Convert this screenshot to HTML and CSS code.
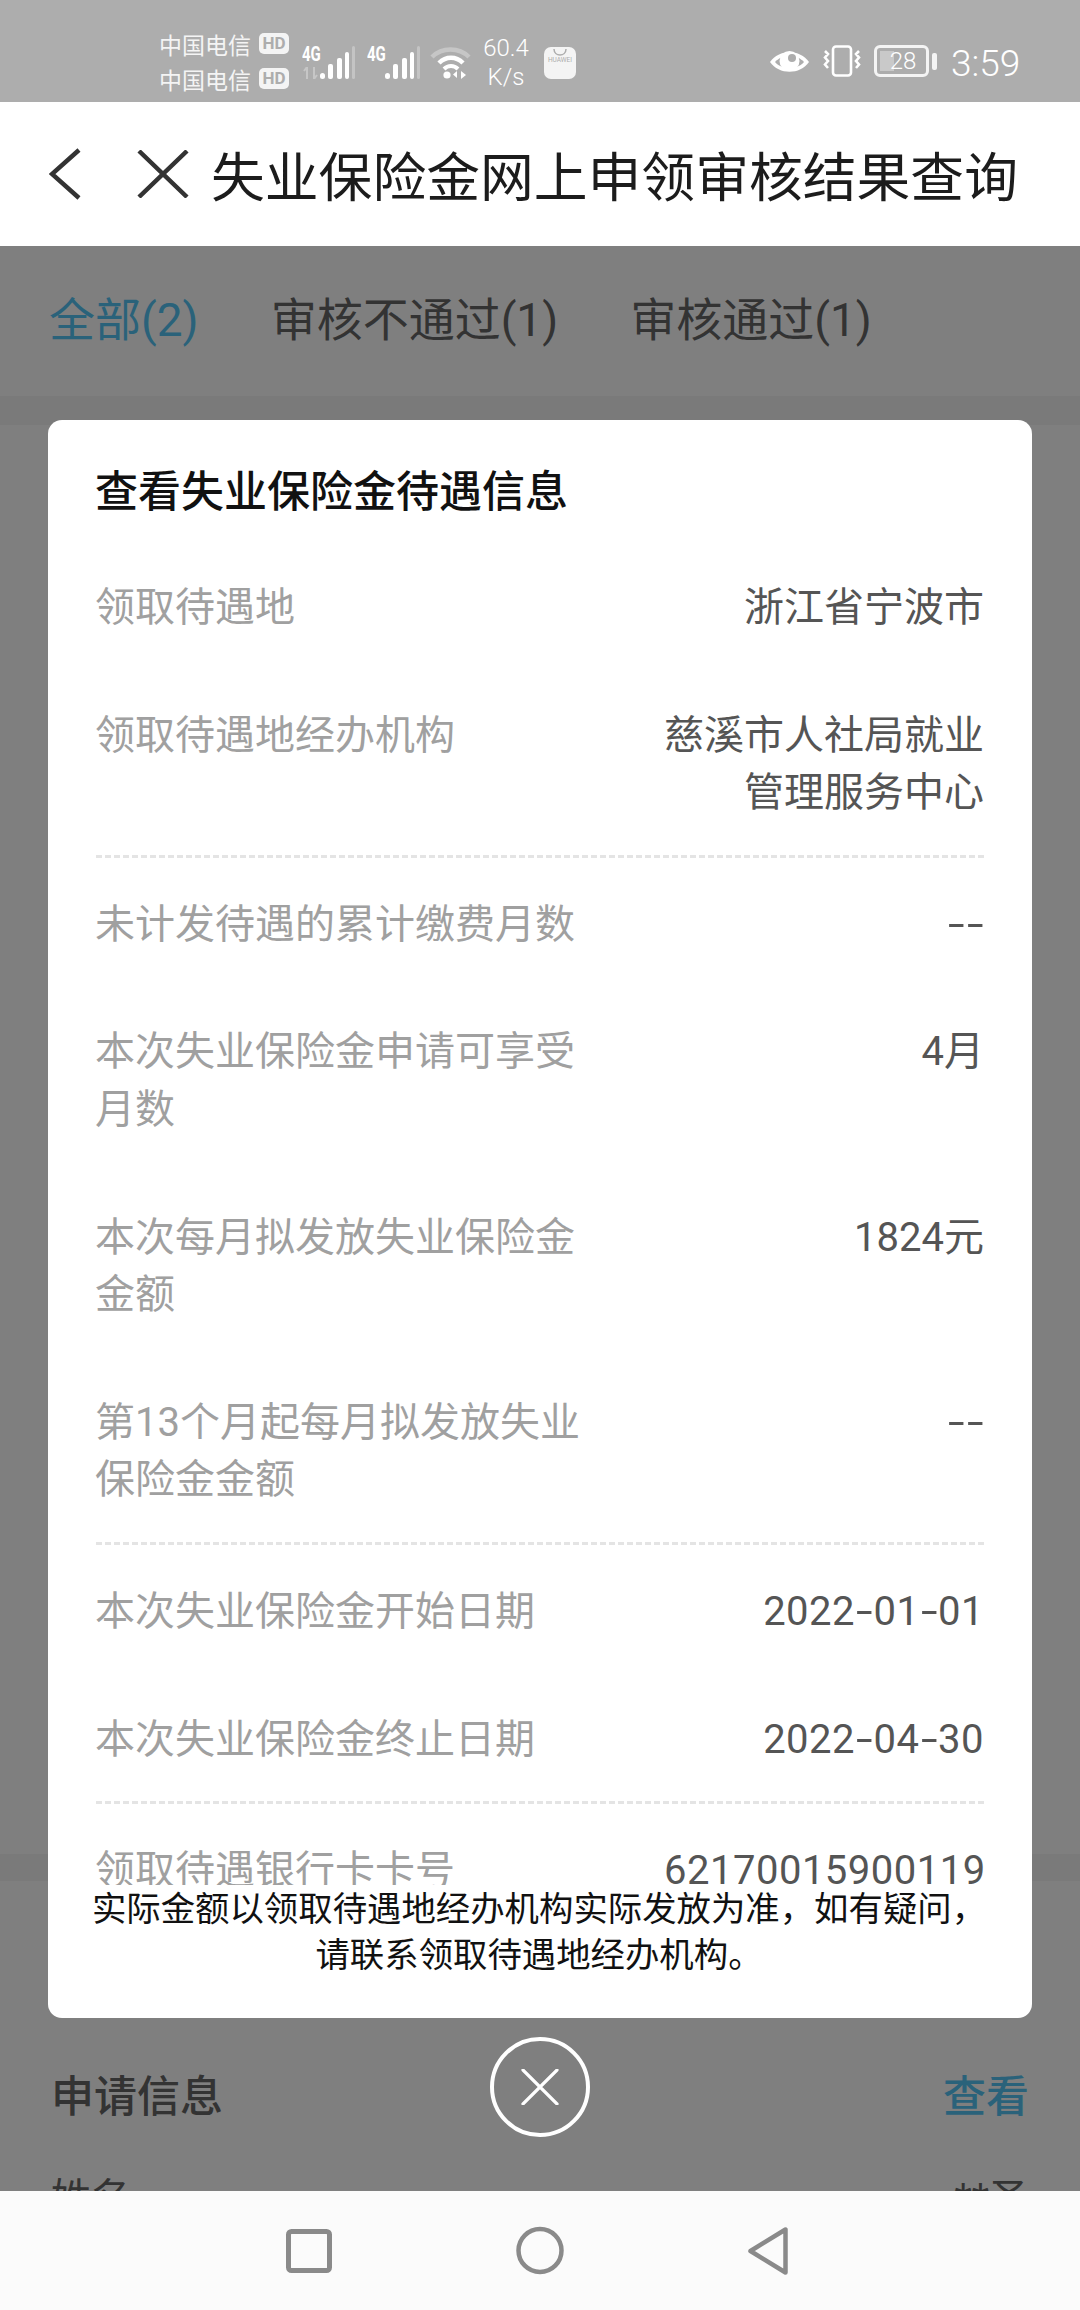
FILE: index.html
```html
<!DOCTYPE html>
<html lang="zh-CN">
<head>
<meta charset="utf-8">
<title>失业保险金网上申领审核结果查询</title>
<link rel="stylesheet" href="styles.css">
</head>
<body>
<div class="phone">
  <div class="status">
    <div class="carriers">
      <div class="carrier"><span>中国电信</span><b class="hd">HD</b></div>
      <div class="carrier"><span>中国电信</span><b class="hd">HD</b></div>
    </div>
    <div class="net net-a">
      <span class="g4">4G</span>
      <svg class="arrows" width="15" height="12" viewBox="0 0 15 12"><path d="M4 0v12M4 0 1 4M11 12V0M11 12l3-4" fill="none" stroke="#c6c6c6" stroke-width="2"/></svg>
      <svg class="bars" width="35" height="33" viewBox="0 0 35 33"><rect x="0" y="27" width="5" height="6" rx="2.500" fill="#fff"/><rect x="8" y="18" width="5" height="15" rx="2" fill="#fff"/><rect x="17" y="12" width="5" height="21" rx="2" fill="#fff"/><rect x="25" y="6" width="4" height="27" rx="2" fill="#fff"/><rect x="32" y="0" width="3" height="33" rx="1.500" fill="#c4c4c4"/></svg>
    </div>
    <div class="net net-b">
      <span class="g4">4G</span>
      <svg class="bars" width="35" height="33" viewBox="0 0 35 33"><rect x="0" y="27" width="5" height="6" rx="2.500" fill="#fff"/><rect x="8" y="18" width="5" height="15" rx="2" fill="#fff"/><rect x="17" y="12" width="5" height="21" rx="2" fill="#fff"/><rect x="25" y="6" width="4" height="27" rx="2" fill="#fff"/><rect x="32" y="0" width="3" height="33" rx="1.500" fill="#c4c4c4"/></svg>
    </div>
    <svg class="wifi" width="42" height="33" viewBox="0 0 42 33"><path d="M2 11C12 1 29 1 39 11" fill="none" stroke="#c6c6c6" stroke-width="4.500"/><path d="M9 17c7-7 17-7 24 0" fill="none" stroke="#fff" stroke-width="4.500"/><path d="M14 23c4-4 10-4 14 0" fill="none" stroke="#fff" stroke-width="4"/><circle cx="17" cy="29" r="3.600" fill="#fff"/><path d="M27 25v7l-4-3.500zM31 33v-8l5 4z" fill="#fff"/></svg>
    <div class="speed"><span>60.4</span><span>K/s</span></div>
    <div class="app"><svg width="14" height="7" viewBox="0 0 14 7"><path d="M1 0c0 8 12 8 12 0" fill="none" stroke="#adadad" stroke-width="1.500"/></svg><span>HUAWEI</span></div>
    <div class="right">
      <svg class="eye" width="41" height="26" viewBox="0 0 41 26"><path d="M1 13C10 0 31 0 40 13 31 26 10 26 1 13Z" fill="#fff"/><path d="M6 13C13 5 28 5 35 13 28 21 13 21 6 13Z" fill="#adadad"/><circle cx="20.500" cy="12" r="10" fill="#fff"/><circle cx="23" cy="9" r="4" fill="#adadad"/></svg>
      <svg class="vib" width="40" height="32" viewBox="0 0 40 32"><rect x="11" y="1.500" width="18" height="29" rx="3" fill="none" stroke="#fff" stroke-width="2.600"/><path d="M3 6l3 3-3 3.500 3 3.500-3 3.500 3 3.500M37 6l-3 3 3 3.500-3 3.500 3 3.500-3 3.500" fill="none" stroke="#fff" stroke-width="2.600"/></svg>
      <div class="battery"><span class="level"></span><span class="num">28</span></div>
      <span class="nub"></span>
      <span class="time">3:59</span>
    </div>
  </div>

  <header class="top">
    <svg class="back" width="32" height="52" viewBox="0 0 32 52"><path d="M30 2 3 26l27 24" fill="none" stroke="#333" stroke-width="4.500"/></svg>
    <svg class="shut" width="52" height="48" viewBox="0 0 52 48"><path d="M2 1l48 46M50 1 2 47" fill="none" stroke="#333" stroke-width="4.500"/></svg>
    <h1 class="page-title">失业保险金网上申领审核结果查询</h1>
  </header>

  <main class="page">
    <nav class="tabs">
      <span class="tab active">全部(2)</span>
      <span class="tab">审核不通过(1)</span>
      <span class="tab">审核通过(1)</span>
    </nav>
    <div class="band"></div>
    <div class="list"></div>
    <div class="band band-low"></div>
    <section class="apply">
      <div class="apply-head"><h2>申请信息</h2><span class="link">查看</span></div>
      <div class="apply-row"><span>姓名</span><span>**圣</span></div>
    </section>

    <div class="overlay">
      <div class="modal">
        <h3 class="modal-title">查看失业保险金待遇信息</h3>
        <div class="scroller">
          <div class="group">
            <div class="row"><div class="key">领取待遇地</div><div class="val">浙江省宁波市</div></div>
            <div class="row"><div class="key">领取待遇地经办机构</div><div class="val">慈溪市人社局就业管理服务中心</div></div>
          </div>
          <div class="group">
            <div class="row"><div class="key">未计发待遇的累计缴费月数</div><div class="val"><span class="dash">-</span><span class="dash">-</span></div></div>
            <div class="row"><div class="key">本次失业保险金申请可享受月数</div><div class="val">4月</div></div>
            <div class="row"><div class="key">本次每月拟发放失业保险金金额</div><div class="val">1824元</div></div>
            <div class="row"><div class="key">第13个月起每月拟发放失业保险金金额</div><div class="val"><span class="dash">-</span><span class="dash">-</span></div></div>
          </div>
          <div class="group">
            <div class="row"><div class="key">本次失业保险金开始日期</div><div class="val digits">2022<span class="dash">-</span>01<span class="dash">-</span>01</div></div>
            <div class="row"><div class="key">本次失业保险金终止日期</div><div class="val digits">2022<span class="dash">-</span>04<span class="dash">-</span>30</div></div>
          </div>
          <div class="group">
            <div class="row"><div class="key">领取待遇银行卡卡号</div><div class="val digits">62170015900119</div></div>
          </div>
        </div>
        <p class="note">实际金额以领取待遇地经办机构实际发放为准，如有疑问，<br>请联系领取待遇地经办机构。</p>
      </div>
      <button class="close" type="button" aria-label="关闭">
        <svg width="38" height="36" viewBox="0 0 38 36"><path d="M2 1l34 34M36 1 2 35" fill="none" stroke="#fff" stroke-width="3.200" stroke-linecap="round"/></svg>
      </button>
    </div>
  </main>

  <footer class="navbar">
    <svg width="46" height="44" viewBox="0 0 46 44"><rect x="2.500" y="2.500" width="41" height="39" rx="3" fill="none" stroke="#8a8a8a" stroke-width="5"/></svg>
    <svg width="48" height="49" viewBox="0 0 48 49"><circle cx="24" cy="24.500" r="21.500" fill="none" stroke="#8a8a8a" stroke-width="4.500"/></svg>
    <svg width="42" height="50" viewBox="0 0 42 50"><path d="M38.500 3.500v43L3.500 25Z" fill="none" stroke="#8a8a8a" stroke-width="4.500" stroke-linejoin="round"/></svg>
  </footer>
</div>
</body>
</html>
```

FILE: styles.css
```css
* { box-sizing: border-box; }
html, body { margin: 0; padding: 0; }
body {
  width: 1080px;
  height: 2310px;
  overflow: hidden;
  font-family: Roboto, "Noto Sans CJK SC", sans-serif;
  background: #fff;
}
.phone { width: 1080px; height: 2310px; display: flex; flex-direction: column; }

/* status bar */
.status {
  height: 102px;
  flex: none;
  background: #adadad;
  color: #fff;
  display: flex;
  align-items: center;
  padding-left: 159px;
  position: relative;
}
.carriers { width: 132px; flex: none; display: flex; flex-direction: column; gap: 13px; margin-top: 20px; }
.carrier { display: flex; align-items: center; gap: 8px; height: 22px; font-size: 23px; line-height: 22px; color: #f4f4f4; }
.carrier span { font-family: "Noto Sans CJK SC", sans-serif; }
.hd {
  width: 30px; height: 21px; border-radius: 5px; background: #f4f4f4; color: #adadad;
  font-size: 17px; font-weight: 700; line-height: 21px; text-align: center;
}
.net { flex: none; width: 53px; height: 33px; margin-top: 22px; display: flex; justify-content: flex-end; position: relative; }
.net-a { margin-left: 11px; }
.net-b { margin-left: 12px; }
.g4 { position: absolute; left: 0; top: 0; font-size: 20px; font-weight: 700; line-height: 16px; transform: scaleX(.75); transform-origin: left top; }
.arrows { position: absolute; left: 1px; top: 21px; }
.wifi { flex: none; margin: 22px 0 0 10px; }
.speed { flex: none; width: 50px; margin-left: 9px; display: flex; flex-direction: column; align-items: center; font-size: 24px; line-height: 29px; font-weight: 300; margin-top: 23px; }
.app {
  flex: none; width: 32px; height: 32px; margin: 23px 0 0 13px; border-radius: 7px; background: #f4f4f4;
  display: flex; flex-direction: column; align-items: center; padding-top: 2px; overflow: hidden;
}
.app span { font-size: 6.500px; line-height: 9px; color: #adadad; }
.right { position: absolute; left: 769px; top: 45px; display: flex; align-items: center; height: 32px; }
.eye { flex: none; margin-right: 12px; margin-top: 1px; }
.vib { flex: none; margin-right: 12px; }
.battery {
  width: 55px; height: 32px; border: 3px solid #f4f4f4; border-radius: 6px; position: relative;
  display: flex; align-items: center; justify-content: center; flex: none;
}
.level { position: absolute; left: 3px; top: 3px; bottom: 3px; width: 14px; background: #c9c9c9; }
.num { position: relative; font-size: 24px; font-weight: 300; line-height: 26px; padding-left: 3px; }
.nub { width: 5px; height: 17px; border-radius: 2px; background: #f4f4f4; margin-left: 3px; flex: none; }
.time { font-size: 37px; font-weight: 300; line-height: 32px; margin-left: 14px; margin-top: 6px; }

/* header */
.top {
  height: 144px;
  flex: none;
  background: #fff;
  display: flex;
  align-items: center;
  padding-left: 49px;
}
.back { flex: none; margin-right: 56px; }
.shut { flex: none; margin-right: 22px; }
.page-title { margin: 0; font-size: 53.800px; font-weight: 400; line-height: 60px; color: #1c1c1c; white-space: nowrap; font-family: "Noto Sans CJK SC", sans-serif; }

/* page under the dialog */
.page { flex: 1; position: relative; overflow: hidden; background: #fff; min-height: 0; }
.tabs { height: 150px; display: flex; align-items: center; gap: 72px; padding: 0 0 11px 49px; font-size: 46px; color: #666; }
.tab.active { color: #55c5f5; }
.band { height: 29px; background: #f4f4f4; }
.band-low { height: 27px; }
.list { height: 1429px; }
.apply { padding: 0 51px; }
.apply-head { display: flex; justify-content: space-between; align-items: center; height: 90px; margin-top: 167px; font-size: 43px; font-weight: 500; color: #666; }
.apply-head h2 { margin: 0; font-size: 43px; font-weight: 500; }
.link { color: #55c5f5; }
.apply-row { display: flex; justify-content: space-between; font-size: 40px; line-height: 58px; color: #666; margin-top: 32px; }

/* dialog */
.overlay {
  position: absolute; inset: 0;
  background: rgba(0, 0, 0, .5);
  display: flex; flex-direction: column; align-items: center;
  padding-top: 174px;
}
.modal {
  width: 984px; height: 1598px; flex: none;
  background: #fff; border-radius: 14px;
  display: flex; flex-direction: column;
}
.modal-title { margin: 0; padding: 43px 48px 0 47px; font-size: 43px; line-height: 58px; font-weight: 500; color: #111; flex: none; }
.scroller { flex: 1; min-height: 0; overflow: hidden; padding: 58px 48px 0; }
.group { display: flex; flex-direction: column; gap: 70px; padding-bottom: 33px; margin-bottom: 38px; border-bottom: 3px dashed #e4e4e4; }
.group:last-child { border-bottom: 0; }
.row { display: flex; justify-content: space-between; gap: 20px; font-size: 40px; line-height: 57.600px; }
.key { width: 490px; flex: none; color: #a0a0a0; margin-left: -1px; }
.val { width: 320px; flex: none; text-align: right; color: #555; }
.digits { letter-spacing: .5px; }
.dash { display: inline-block; width: 18.500px; text-align: center; transform: scaleX(1.500); letter-spacing: 0; }
.note { margin: 0; flex: none; padding: 1px 2px 40px 0; font-size: 34.400px; line-height: 46px; text-align: center; color: #111; white-space: nowrap; }
.close {
  width: 100px; height: 100px; flex: none; margin-top: 19px; padding: 0;
  border: 4px solid #fff; border-radius: 50%; background: transparent;
  display: flex; align-items: center; justify-content: center;
}

/* nav bar */
.navbar {
  height: 119px; flex: none; background: #fbfbfb;
  display: flex; align-items: center; justify-content: space-between;
  padding: 0 291px 0 286px;
}
```
